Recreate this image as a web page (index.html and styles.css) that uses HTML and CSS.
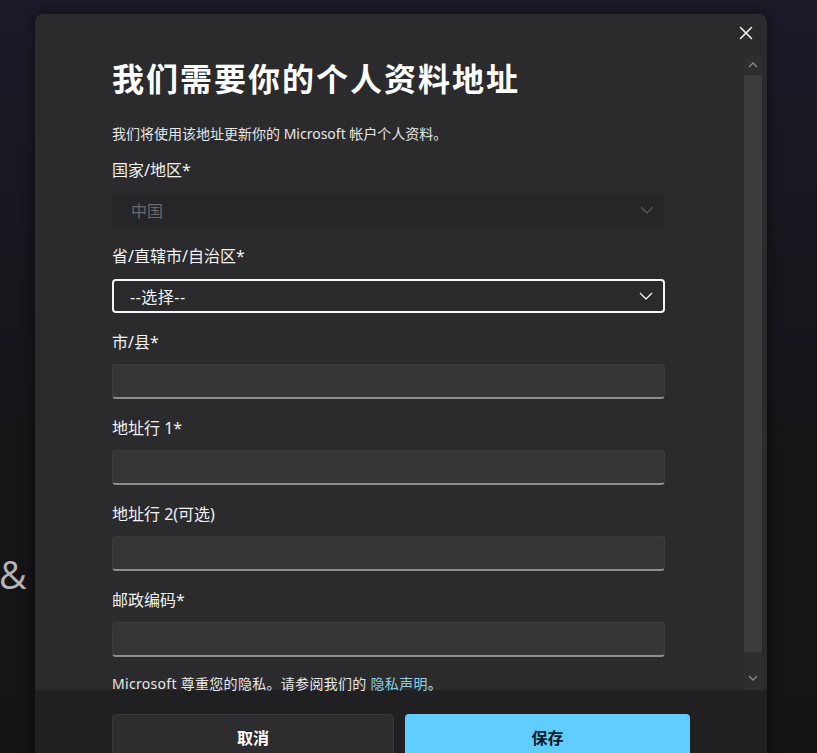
FILE: index.html
```html
<!DOCTYPE html>
<html lang="zh-CN">
<head>
<meta charset="utf-8">
<title>个人资料地址</title>
<link rel="stylesheet" href="styles.css">
</head>
<body>
<div class="backdrop">
  <span class="amp">&amp;</span>
</div>
<div class="dialog" role="dialog">
  <button class="close" aria-label="关闭">
    <svg width="14" height="14" viewBox="0 0 14 14"><path d="M1.5 1.5 L12.5 12.5 M12.5 1.5 L1.5 12.5" stroke="#f2f2f2" stroke-width="1.6" stroke-linecap="round" fill="none"/></svg>
  </button>
  <div class="body">
    <div class="content">
      <h1 class="title">我们需要你的个人资料地址</h1>
      <p class="intro">我们将使用该地址更新你的 Microsoft 帐户个人资料。</p>

      <div class="field">
        <div class="label">国家/地区*</div>
        <div class="select disabled">
          <span>中国</span>
          <svg width="14" height="8" viewBox="0 0 14 8"><path d="M1 1 L7 7 L13 1" stroke="#58575a" stroke-width="1.3" fill="none"/></svg>
        </div>
      </div>

      <div class="field">
        <div class="label">省/直辖市/自治区*</div>
        <div class="select focused">
          <span>--选择--</span>
          <svg width="14" height="8" viewBox="0 0 14 8"><path d="M1 1 L7 7 L13 1" stroke="#f0f0f0" stroke-width="1.4" fill="none"/></svg>
        </div>
      </div>

      <div class="field">
        <div class="label">市/县*</div>
        <div class="input"></div>
      </div>

      <div class="field">
        <div class="label">地址行 1*</div>
        <div class="input"></div>
      </div>

      <div class="field">
        <div class="label">地址行 2(可选)</div>
        <div class="input"></div>
      </div>

      <div class="field">
        <div class="label">邮政编码*</div>
        <div class="input"></div>
      </div>

      <p class="privacy">Microsoft 尊重您的隐私。请参阅我们的 <a href="#" class="link">隐私声明</a>。</p>
    </div>
    <div class="scrollbar">
      <svg class="arrow up" width="10" height="6" viewBox="0 0 10 6"><path d="M1 5 L5 1 L9 5" stroke="#8a898c" stroke-width="1.3" fill="none"/></svg>
      <div class="thumb"></div>
      <svg class="arrow down" width="10" height="6" viewBox="0 0 10 6"><path d="M1 1 L5 5 L9 1" stroke="#8a898c" stroke-width="1.3" fill="none"/></svg>
    </div>
  </div>
  <div class="footer">
    <button class="btn secondary">取消</button>
    <button class="btn primary">保存</button>
  </div>
</div>
</body>
</html>
```

FILE: styles.css
```css
* { box-sizing: border-box; }

html, body {
  margin: 0;
  height: 100%;
}

body {
  width: 817px;
  height: 753px;
  overflow: hidden;
  position: relative;
  background: linear-gradient(180deg, #1b1b29 0%, #18171f 30%, #151417 60%, #141316 100%);
  font-family: "Noto Sans", "Noto Sans CJK SC", sans-serif;
  color: #ffffff;
}

.backdrop {
  height: 100%;
}

.amp {
  position: absolute;
  left: -1px;
  top: 548px;
  font-family: "Open Sans", "Noto Sans", sans-serif;
  font-size: 38px;
  color: #b4b3b6;
}

.dialog {
  position: absolute;
  left: 35px;
  top: 14px;
  width: 732px;
  height: 770px;
  background: #2b2a2d;
  border-radius: 8px;
  box-shadow: 0 0 14px rgba(0, 0, 0, 0.55);
  display: flex;
  flex-direction: column;
  overflow: hidden;
}

.close {
  position: absolute;
  right: 14px;
  top: 12px;
  width: 14px;
  height: 14px;
  padding: 0;
  border: 0;
  background: none;
  display: flex;
}

.body {
  position: relative;
  height: 676px;
  flex: none;
}

.content {
  padding: 40px 102px 0 77px;
}

.title {
  margin: 0;
  font-family: "Noto Sans CJK SC", sans-serif;
  font-size: 32px;
  font-weight: 700;
  line-height: 46px;
  letter-spacing: 2px;
  color: #ffffff;
}

.intro {
  margin: 24px 0 0;
  font-size: 14px;
  line-height: 20px;
  color: #e6e6e6;
}

.field {
  margin-top: 15px;
}

.field + .field {
  margin-top: 18px;
}

.label {
  font-size: 16px;
  line-height: 22px;
  color: #f2f2f2;
  margin-bottom: 12px;
}

.select {
  height: 34px;
  border-radius: 4px;
  display: flex;
  align-items: center;
  justify-content: space-between;
  padding: 0 10px 0 18px;
  font-size: 16px;
}

.select.disabled {
  background: #262528;
  border: 1px solid #29282b;
  color: #6a696c;
}

.select.focused {
  background: #2a292c;
  border: 2px solid #f4f4f4;
  color: #f4f4f4;
  padding-left: 16px;
  letter-spacing: 0.5px;
}

.input {
  height: 35px;
  background: #363538;
  border: 1px solid #3d3c3f;
  border-bottom: 2px solid #8e8d90;
  border-radius: 4px;
}

.label + .input {
  margin-top: -1px;
}

.privacy {
  margin: 17px 0 0;
  font-size: 14px;
  line-height: 20px;
  color: #e8e8e8;
  letter-spacing: 0.3px;
}

.link {
  color: #86d3e6;
  text-decoration: none;
}

.scrollbar {
  position: absolute;
  right: 5px;
  top: 43px;
  bottom: 0;
  width: 18px;
  background: #2e2d30;
  display: flex;
  flex-direction: column;
  align-items: center;
}

.arrow.up {
  margin-top: 5px;
}

.thumb {
  width: 18px;
  height: 577px;
  margin-top: 7px;
  background: #3c3b3e;
}

.arrow.down {
  margin-top: 23px;
}

.footer {
  flex: 1;
  background: #201f22;
  display: flex;
  gap: 11px;
  padding: 24px 77px 0 77px;
}

.btn {
  height: 48px;
  border-radius: 4px;
  font-family: "Noto Sans CJK SC", sans-serif;
  font-size: 16px;
  font-weight: 700;
  cursor: pointer;
  padding-bottom: 4px;
}

.btn.secondary {
  width: 282px;
  background: #2d2c2f;
  border: 1px solid #38373a;
  color: #ffffff;
}

.btn.primary {
  width: 285px;
  background: #60cdff;
  border: 0;
  color: #0a1a28;
}
```
